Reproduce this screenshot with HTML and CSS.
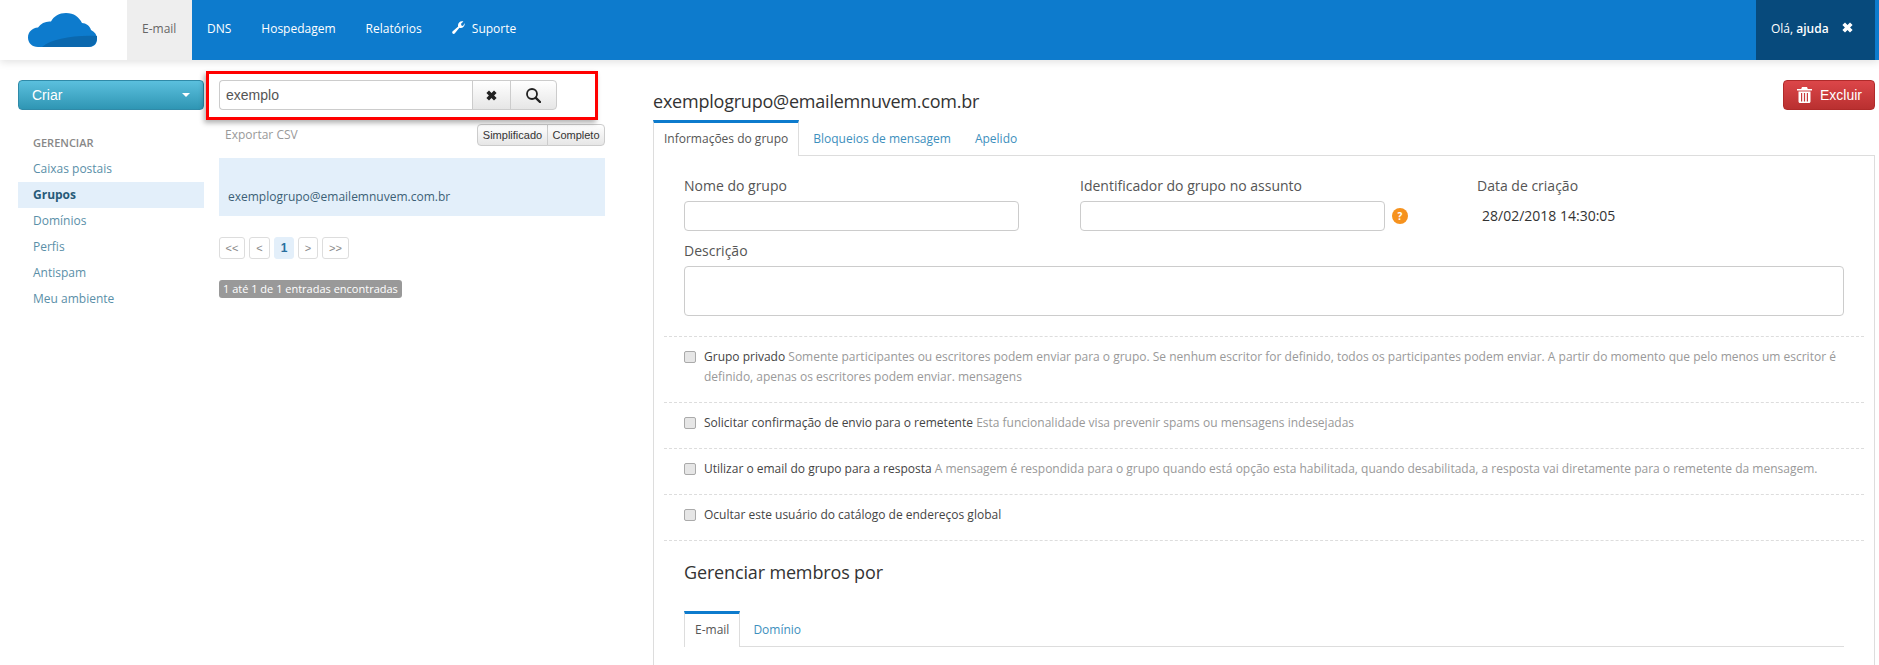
FILE: index.html
```html
<!DOCTYPE html>
<html lang="pt-BR">
<head>
<meta charset="utf-8">
<title>Grupos</title>
<link rel="stylesheet" href="styles.css">
</head>
<body>
<div class="page">
  <header class="topbar">
    <div class="brand">
      <svg class="logo" width="70" height="35" viewBox="0 0 70 35" aria-hidden="true">
        <path fill="#0d7bcd" d="M10 34C4 34 0 30 0 24.500C0 19 4 15 10 14.500C13 10 18 8 23 8.500C26 3 31 0 38 0C46 0 51 4 54 10C58 10 62 13 63 17C67 19 69 22 69 26C69 31 66 34 60 34Z"/>
        <path fill="#0b68ae" d="M14 34C24 26 44 22 69 23C69.500 29 66 34 60 34Z"/>
      </svg>
    </div>
    <nav class="mainnav">
      <a class="navitem navitem-active">E-mail</a>
      <a class="navitem">DNS</a>
      <a class="navitem">Hospedagem</a>
      <a class="navitem">Relatórios</a>
      <a class="navitem">
        <svg class="wrench" width="13" height="13" viewBox="0 0 13 13" aria-hidden="true"><path fill="#fff" d="M12.700 3C12.700 5.300 10.900 7 8.700 7C8.200 7 7.800 6.900 7.400 6.800L2.900 12.300C2.300 13 1.200 13.100.6 12.400C0 11.800 0 10.800.7 10.200L6.200 5.600C6 5.200 6 4.700 6 4.200C6 2 7.800.2 10 .2C10.500.2 11 .3 11.400.4L9 2.800L9.400 4.500L11 4.900L12.500 2.300C12.600 2.500 12.700 2.700 12.700 3Z"/></svg>
        Suporte
      </a>
    </nav>
    <div class="userbox">
      <span>Olá, <b>ajuda</b></span>
      <svg class="closeicon" width="11" height="11" viewBox="0 0 11 11" aria-hidden="true"><path fill="#fff" d="M3 .4L5.500 2.900L8 .4L10.600 3L8.100 5.500L10.600 8L8 10.600L5.500 8.100L3 10.600L.4 8L2.900 5.500L.4 3Z"/></svg>
    </div>
  </header>

  <main class="layout">
    <aside class="sidebar">
      <button class="btn-create"><span>Criar</span><i class="caret"></i></button>
      <div class="menu-title">GERENCIAR</div>
      <ul class="menu">
        <li>Caixas postais</li>
        <li class="menu-active">Grupos</li>
        <li>Domínios</li>
        <li>Perfis</li>
        <li>Antispam</li>
        <li>Meu ambiente</li>
      </ul>
    </aside>

    <section class="listcol">
      <div class="searchrow">
        <div class="highlight"></div>
        <div class="searchbox">
          <input class="searchinput" type="text" value="exemplo">
          <button class="searchbtn btn-clear">
            <svg width="11" height="11" viewBox="0 0 11 11" aria-hidden="true"><path fill="#222" d="M3 .4L5.500 2.900L8 .4L10.600 3L8.100 5.500L10.600 8L8 10.600L5.500 8.100L3 10.600L.4 8L2.900 5.500L.4 3Z"/></svg>
          </button>
          <button class="searchbtn btn-search">
            <svg width="15" height="15" viewBox="0 0 15 15" aria-hidden="true"><circle cx="6" cy="6" r="5" fill="none" stroke="#222" stroke-width="1.800"/><path d="M9.800 9.800L14 14" stroke="#222" stroke-width="2.400" stroke-linecap="round"/></svg>
          </button>
        </div>
      </div>
      <div class="toolrow">
        <a class="exportlink">Exportar CSV</a>
        <div class="viewgroup">
          <button class="viewbtn">Simplificado</button>
          <button class="viewbtn">Completo</button>
        </div>
      </div>
      <div class="resultitem">exemplogrupo@emailemnuvem.com.br</div>
      <div class="pager">
        <a class="pg pg-first">&lt;&lt;</a>
        <a class="pg pg-prev">&lt;</a>
        <a class="pg pg-cur">1</a>
        <a class="pg pg-next">&gt;</a>
        <a class="pg pg-last">&gt;&gt;</a>
      </div>
      <div class="countbadge">1 até 1 de 1 entradas encontradas</div>
    </section>

    <section class="detail">
      <div class="detailhead">
        <h1 class="detailtitle">exemplogrupo@emailemnuvem.com.br</h1>
        <button class="btn-delete">
          <svg width="15" height="16" viewBox="0 0 15 16" aria-hidden="true"><path fill="#fff" d="M5 0H10L10.800 2H15V3.500H0V2H4.200ZM1.500 4.500H13.500V14.500C13.500 15.300 12.900 16 12 16H3C2.100 16 1.500 15.300 1.500 14.500ZM4 6V14.500H5.200V6ZM6.900 6V14.500H8.100V6ZM9.800 6V14.500H11V6Z"/></svg>
          Excluir
        </button>
      </div>
      <div class="tabs">
        <a class="tab tab-active">Informações do grupo</a>
        <a class="tab">Bloqueios de mensagem</a>
        <a class="tab">Apelido</a>
      </div>
      <div class="panel">
        <div class="fieldgrid">
          <div>
            <label class="fieldlabel">Nome do grupo</label>
            <input class="textfield tf-name" type="text">
          </div>
          <div>
            <label class="fieldlabel">Identificador do grupo no assunto</label>
            <div class="withhelp">
              <input class="textfield tf-id" type="text">
              <span class="help">?</span>
            </div>
          </div>
          <div>
            <label class="fieldlabel">Data de criação</label>
            <div class="datevalue">28/02/2018 14:30:05</div>
          </div>
        </div>
        <label class="fieldlabel desc-label">Descrição</label>
        <textarea class="textfield descarea"></textarea>

        <div class="options">
          <div class="option"><input type="checkbox" class="check"><p><span class="optname">Grupo privado</span> <span class="optdesc">Somente participantes ou escritores podem enviar para o grupo. Se nenhum escritor for definido, todos os participantes podem enviar. A partir do momento que pelo menos um escritor é definido, apenas os escritores podem enviar. mensagens</span></p></div>
          <div class="option"><input type="checkbox" class="check"><p><span class="optname">Solicitar confirmação de envio para o remetente</span> <span class="optdesc">Esta funcionalidade visa prevenir spams ou mensagens indesejadas</span></p></div>
          <div class="option"><input type="checkbox" class="check"><p><span class="optname">Utilizar o email do grupo para a resposta</span> <span class="optdesc">A mensagem é respondida para o grupo quando está opção esta habilitada, quando desabilitada, a resposta vai diretamente para o remetente da mensagem.</span></p></div>
          <div class="option"><input type="checkbox" class="check"><p><span class="optname">Ocultar este usuário do catálogo de endereços global</span></p></div>
        </div>

        <h2 class="subhead">Gerenciar membros por</h2>
        <div class="tabs subtabs">
          <a class="tab tab-active">E-mail</a>
          <a class="tab">Domínio</a>
        </div>
      </div>
    </section>
  </main>
</div>
</body>
</html>
```
FILE: styles.css
```css
* { box-sizing: border-box; }
html, body { margin: 0; padding: 0; background: #fff; }
body { font-family: "Open Sans", "Liberation Sans", sans-serif; font-size: 12px; color: #444; }
.page { height: 665px; overflow: hidden; }

/* top bar */
.topbar { display: flex; height: 60px; background: #0d7bcd; box-shadow: 0 2px 8px rgba(0,0,0,.12); position: relative; }
.brand { width: 127px; background: #fff; padding: 13px 0 0 28px; }
.logo { display: block; }
.mainnav { display: flex; flex: 1; }
.navitem { display: flex; align-items: center; gap: 7px; height: 60px; padding: 0 15px; color: #fff; font-size: 12px; padding-bottom: 3px; }
.navitem-active { width: 65px; background: #eee; color: #666; }
.wrench { margin-top: -3px; }
.userbox { display: flex; align-items: center; width: 119px; margin-right: 4px; padding: 0 0 3px 15px; background: #074a7c; color: #fff; font-size: 12px; }
.userbox b { font-weight: 600; }
.closeicon { margin-left: 13px; margin-top: -3px; }

/* layout */
.layout { display: flex; align-items: flex-start; padding: 20px 4px 0 18px; }
.sidebar { width: 186px; flex: none; }
.listcol { width: 386px; flex: none; margin-left: 15px; }
.detail { width: 1222px; flex: none; margin-left: 48px; }

/* sidebar */
.btn-create { display: flex; align-items: center; justify-content: space-between; width: 186px; height: 30px; padding: 0 13px; border: 1px solid #2f8aa8; border-radius: 4px; background: linear-gradient(#5bc0de, #2f96b4); color: #fff; font: 14px "Liberation Sans", sans-serif; }
.caret { width: 0; height: 0; border: 4px solid transparent; border-top-color: #fff; border-bottom: 0; }
.menu-title { padding: 23px 0 0 15px; height: 46px; line-height: 20px; color: #888; font-size: 11px; font-weight: 600; }
.menu { list-style: none; margin: 0; padding: 0; }
.menu li { height: 26px; line-height: 25px; padding-left: 15px; color: #5a8fa8; font-size: 12px; }
.menu .menu-active { background: #e3effa; color: #275a78; font-weight: 700; }

/* search */
.searchrow { position: relative; height: 30px; }
.highlight { position: absolute; left: -13px; top: -9px; width: 392px; height: 49px; border: 3px solid #f00; box-shadow: -2px 3px 5px rgba(0,0,0,.3); pointer-events: none; }
.searchbox { display: flex; width: 338px; height: 30px; }
.searchinput { width: 253px; height: 30px; padding: 0 6px; border: 1px solid #ccc; border-right: 0; border-radius: 4px 0 0 4px; background: #fff; color: #555; font: 14px "Liberation Sans", sans-serif; outline: 0; }
.searchbtn { display: flex; align-items: center; justify-content: center; height: 30px; padding: 0; border: 1px solid #ccc; background: linear-gradient(#fff, #e6e6e6); }
.btn-clear { width: 39px; }
.btn-search { width: 47px; margin-left: -1px; border-radius: 0 4px 4px 0; }

.toolrow { display: flex; align-items: center; justify-content: space-between; height: 22px; margin-top: 14px; padding-left: 6px; }
.exportlink { color: #999; font-size: 12px; margin-top: -1px; }
.viewgroup { display: flex; }
.viewbtn { height: 22px; padding: 0; border: 1px solid #ccc; background: linear-gradient(#fff, #e6e6e6); color: #333; font: 11px "Liberation Sans", sans-serif; }
.viewbtn:first-child { width: 71px; border-radius: 4px 0 0 4px; }
.viewbtn:last-child { width: 58px; margin-left: -1px; border-radius: 0 4px 4px 0; }

.resultitem { height: 58px; margin-top: 12px; padding: 30px 0 0 9px; background: #e3effa; line-height: 18px; color: #3c5f76; font-size: 12px; }

.pager { display: flex; gap: 4px; margin-top: 21px; }
.pg { display: flex; align-items: center; justify-content: center; height: 22px; border: 1px solid #ddd; border-radius: 3px; color: #888; font: 11px "Liberation Sans", sans-serif; }
.pg-first, .pg-last { width: 26px; }
.pg-last { width: 27px; }
.pg-prev { width: 21px; }
.pg-cur { width: 20px; border-color: #e3effa; background: #e3effa; color: #2a6f9e; font-size: 12px; font-weight: 700; }
.pg-next { width: 20px; }
.countbadge { width: 183px; height: 18px; margin-top: 21px; padding-left: 4px; border-radius: 3px; background: #999; color: #fff; font-size: 11px; line-height: 18px; white-space: nowrap; }

/* detail */
.detailhead { display: flex; justify-content: space-between; align-items: flex-start; height: 40px; }
.detailtitle { margin: 6px 0 0; font-size: 18px; font-weight: 400; line-height: 30px; color: #333; letter-spacing: -.22px; }
.btn-delete { display: flex; align-items: center; gap: 8px; width: 92px; height: 30px; padding: 0 0 0 13px; border: 1px solid #b02a2a; border-radius: 4px; background: linear-gradient(#dc4649, #b93030); color: #fff; font: 14px "Liberation Sans", sans-serif; }

.tabs { display: flex; height: 36px; border-bottom: 1px solid #ddd; }
.tab { display: block; height: 35px; padding: 3px 10px 0 14px; line-height: 32px; color: #3d8fbd; font-size: 12px; }
.tab-active { height: 36px; padding: 0 10px; border-top: 3px solid #0d7bcd; border-left: 1px solid #ddd; border-right: 1px solid #ddd; background: #fff; color: #555; font-weight: 400; line-height: 32px; }

.panel { height: 520px; padding: 20px 30px 0; border-left: 1px solid #ddd; border-right: 1px solid #ddd; }
.fieldgrid { display: grid; grid-template-columns: 396px 397px 1fr; }
.fieldlabel { display: block; height: 20px; margin-bottom: 5px; line-height: 20px; color: #555; font-size: 14px; }
.textfield { display: block; height: 30px; border: 1px solid #ccc; border-radius: 4px; background: #fff; outline: 0; resize: none; }
.tf-name { width: 335px; }
.tf-id { width: 305px; }
.withhelp { display: flex; align-items: center; gap: 7px; }
.help { width: 16px; height: 16px; border-radius: 50%; background: #f6921e; color: #fff; font-size: 10px; font-weight: 700; line-height: 16px; text-align: center; }
.datevalue { height: 30px; padding-left: 5px; line-height: 30px; color: #333; font-size: 14px; }
.desc-label { margin-top: 10px; }
.descarea { width: 100%; height: 50px; }

.options { margin: 20px -20px 0; border-bottom: 1px dashed #ddd; }
.option { display: flex; gap: 8px; padding: 10px 20px 15px; border-top: 1px dashed #ddd; }
.option p { flex: 1; margin: 0; line-height: 20px; font-size: 12px; }
.check { appearance: none; flex: none; width: 12px; height: 12px; margin: 4px 0 0; border: 1px solid #aaa; border-radius: 2px; background: #e6e6e6; }
.optname { color: #444; }
.optdesc { color: #999; }

.subhead { margin: 19px 0 27px; font-size: 18px; font-weight: 400; line-height: 24px; color: #333; letter-spacing: -.15px; }
.subtabs .tab { padding-left: 13px; }
.subtabs .tab-active { padding-left: 10px; }
```
